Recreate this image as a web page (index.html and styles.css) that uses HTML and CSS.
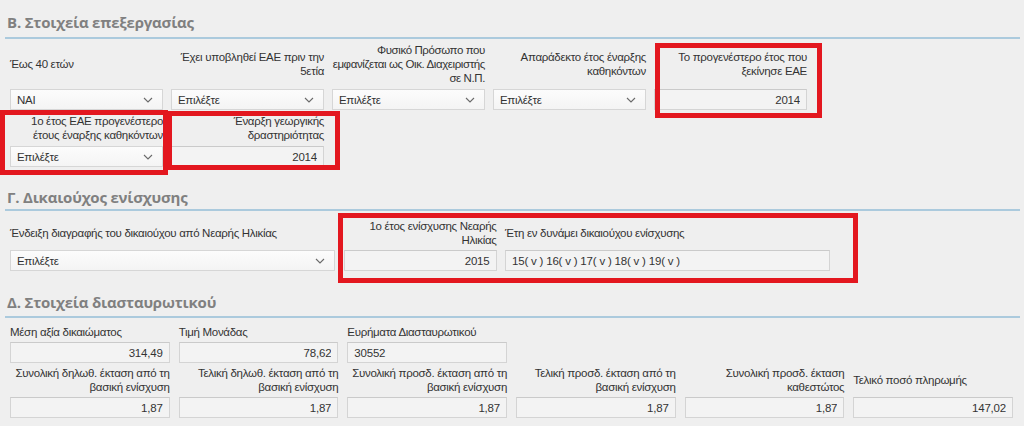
FILE: index.html
```html
<!DOCTYPE html>
<html lang="el">
<head>
    <meta charset="UTF-8">
    <meta name="viewport" content="width=device-width, initial-scale=1.0">
    <title>Στοιχεία επεξεργασίας</title>
    <link rel="stylesheet" href="styles.css">
</head>
<body>
<div class="page">

    <!-- Β. Στοιχεία επεξεργασίας -->
    <h2 class="section-title title-b">Β. Στοιχεία επεξεργασίας</h2>
    <div class="grid-b row-b1">
        <div class="field">
            <label class="lbl lbl-left">Έως 40 ετών</label>
            <div class="select"><span>ΝΑΙ</span><svg width="10" height="6" viewBox="0 0 10 6"><path d="M1 1 L5 5 L9 1" /></svg></div>
        </div>
        <div class="field">
            <label class="lbl">Έχει υποβληθεί ΕΑΕ πριν την 5ετία</label>
            <div class="select"><span>Επιλέξτε</span><svg width="10" height="6" viewBox="0 0 10 6"><path d="M1 1 L5 5 L9 1" /></svg></div>
        </div>
        <div class="field">
            <label class="lbl lbl-nowrap">Φυσικό Πρόσωπο που<br>εμφανίζεται ως Οικ. Διαχειριστής<br>σε Ν.Π.</label>
            <div class="select"><span>Επιλέξτε</span><svg width="10" height="6" viewBox="0 0 10 6"><path d="M1 1 L5 5 L9 1" /></svg></div>
        </div>
        <div class="field">
            <label class="lbl">Απαράδεκτο έτος έναρξης καθηκόντων</label>
            <div class="select"><span>Επιλέξτε</span><svg width="10" height="6" viewBox="0 0 10 6"><path d="M1 1 L5 5 L9 1" /></svg></div>
        </div>
        <div class="field">
            <label class="lbl">Το προγενέστερο έτος που ξεκίνησε ΕΑΕ</label>
            <input class="input" type="text" value="2014" readonly>
        </div>
    </div>
    <div class="grid-b row-b2">
        <div class="field">
            <label class="lbl">1ο έτος ΕΑΕ προγενέστερο έτους έναρξης καθηκόντων</label>
            <div class="select"><span>Επιλέξτε</span><svg width="10" height="6" viewBox="0 0 10 6"><path d="M1 1 L5 5 L9 1" /></svg></div>
        </div>
        <div class="field">
            <label class="lbl">Έναρξη γεωργικής δραστηριότητας</label>
            <input class="input" type="text" value="2014" readonly>
        </div>
    </div>

    <!-- Γ. Δικαιούχος ενίσχυσης -->
    <h2 class="section-title title-g">Γ. Δικαιούχος ενίσχυσης</h2>
    <div class="grid-g">
        <div class="field">
            <label class="lbl lbl-left">Ένδειξη διαγραφής του δικαιούχου από Νεαρής Ηλικίας</label>
            <div class="select"><span>Επιλέξτε</span><svg width="10" height="6" viewBox="0 0 10 6"><path d="M1 1 L5 5 L9 1" /></svg></div>
        </div>
        <div class="field">
            <label class="lbl">1ο έτος ενίσχυσης Νεαρής Ηλικίας</label>
            <input class="input" type="text" value="2015" readonly>
        </div>
        <div class="field">
            <label class="lbl lbl-left">Έτη εν δυνάμει δικαιούχου ενίσχυσης</label>
            <input class="input input-left" type="text" value="15( v ) 16( v ) 17( v ) 18( v ) 19( v )" readonly>
        </div>
    </div>

    <!-- Δ. Στοιχεία διασταυρωτικού -->
    <h2 class="section-title title-d">Δ. Στοιχεία διασταυρωτικού</h2>
    <div class="grid-d row-d1">
        <div class="field">
            <label class="lbl lbl-left">Μέση αξία δικαιώματος</label>
            <input class="input" type="text" value="314,49" readonly>
        </div>
        <div class="field">
            <label class="lbl lbl-left">Τιμή Μονάδας</label>
            <input class="input" type="text" value="78,62" readonly>
        </div>
        <div class="field">
            <label class="lbl lbl-left">Ευρήματα Διασταυρωτικού</label>
            <input class="input input-left" type="text" value="30552" readonly>
        </div>
    </div>
    <div class="grid-d row-d2">
        <div class="field">
            <label class="lbl">Συνολική δηλωθ. έκταση από τη βασική ενίσχυση</label>
            <input class="input" type="text" value="1,87" readonly>
        </div>
        <div class="field">
            <label class="lbl">Τελική δηλωθ. έκταση από τη βασική ενίσχυση</label>
            <input class="input" type="text" value="1,87" readonly>
        </div>
        <div class="field">
            <label class="lbl">Συνολική προσδ. έκταση από τη βασική ενίσχυση</label>
            <input class="input" type="text" value="1,87" readonly>
        </div>
        <div class="field">
            <label class="lbl">Τελική προσδ. έκταση από τη βασική ενίσχυση</label>
            <input class="input" type="text" value="1,87" readonly>
        </div>
        <div class="field">
            <label class="lbl">Συνολική προσδ. έκταση καθεστώτος</label>
            <input class="input" type="text" value="1,87" readonly>
        </div>
        <div class="field">
            <label class="lbl lbl-left">Τελικό ποσό πληρωμής</label>
            <input class="input" type="text" value="147,02" readonly>
        </div>
    </div>

    <!-- red highlight frames drawn over the form -->
    <div class="mark mark-b5"></div>
    <div class="mark mark-b21"></div>
    <div class="mark mark-b22"></div>
    <div class="mark mark-g"></div>
</div>
</body>
</html>
```

FILE: styles.css
```css
body {
    margin: 0;
    background: #efefef;
    font-family: "Liberation Sans", Arial, sans-serif;
    font-size: 11.5px;
    letter-spacing: -0.3px;
    color: #333;
}

.page {
    position: relative;
    padding: 11px 4px 0 5px;
}

.section-title {
    margin: 0;
    padding: 0 0 4px 2px;
    font-family: "Open Sans", sans-serif;
    font-size: 15px;
    font-weight: 700;
    letter-spacing: -0.2px;
    line-height: 22px;
    color: #808080;
    border-bottom: 2px solid #abcadd;
}

.title-g {
    margin-top: 19px;
    padding-bottom: 1px;
}

.title-d {
    margin-top: 20px;
    padding-bottom: 3px;
}

.field {
    display: flex;
    flex-direction: column;
    min-width: 0;
}

.lbl {
    display: flex;
    align-items: center;
    justify-content: flex-end;
    text-align: right;
    line-height: 14px;
    margin-bottom: 4px;
}

.lbl-left {
    justify-content: flex-start;
    text-align: left;
}

.lbl-nowrap {
    white-space: nowrap;
    letter-spacing: -0.4px;
}

/* section B */
.grid-b {
    display: grid;
    grid-template-columns: repeat(5, 153px);
    column-gap: 8px;
    margin-left: 5px;
}

.row-b1 {
    margin-top: 4px;
}

.row-b1 .lbl {
    height: 42px;
}

.row-b2 {
    margin-top: 4px;
}

.row-b2 .lbl {
    height: 28px;
}

/* section Γ */
.grid-g {
    display: grid;
    grid-template-columns: 325px 153px 325px;
    column-gap: 8.5px;
    margin: 8px 0 0 5px;
}

.grid-g .lbl {
    height: 28px;
    margin-bottom: 3px;
}

/* section Δ */
.grid-d {
    display: grid;
    grid-template-columns: repeat(6, 1fr);
    column-gap: 9px;
    margin: 0 7px 0 5px;
}

.row-d1 {
    margin-top: 7px;
}

.row-d1 .lbl {
    height: 14px;
    margin-bottom: 3px;
}

.row-d2 {
    margin-top: 3px;
}

.row-d2 .lbl {
    height: 28px;
    margin-bottom: 3px;
}

/* controls */
.select {
    box-sizing: border-box;
    height: 21px;
    display: flex;
    align-items: center;
    justify-content: space-between;
    padding: 0 9px 0 6px;
    background: linear-gradient(#fcfcfc, #f4f4f4);
    border: 1px solid #d6d6d6;
    color: #333;
}

.select svg path {
    fill: none;
    stroke: #6a6a6a;
    stroke-width: 1.1;
}

.input {
    box-sizing: border-box;
    width: 100%;
    height: 21px;
    margin: 0;
    padding: 0 6px;
    font-family: "Liberation Sans", Arial, sans-serif;
    font-size: 11.5px;
    letter-spacing: -0.2px;
    color: #333;
    text-align: right;
    background: #f3f3f3;
    border: 1px solid #d4d4d4;
    border-top-color: #cacaca;
    outline: none;
}

.input-left {
    text-align: left;
}

/* red annotation frames */
.mark {
    position: absolute;
    box-sizing: border-box;
    border: 5px solid #e3171f;
}

.mark-b5 {
    left: 655px;
    top: 43px;
    width: 167px;
    height: 75px;
}

.mark-b21 {
    left: 0;
    top: 110px;
    width: 168px;
    height: 65px;
}

.mark-b22 {
    left: 167px;
    top: 111px;
    width: 173px;
    height: 59px;
}

.mark-g {
    left: 338px;
    top: 213px;
    width: 520px;
    height: 70px;
}
```
